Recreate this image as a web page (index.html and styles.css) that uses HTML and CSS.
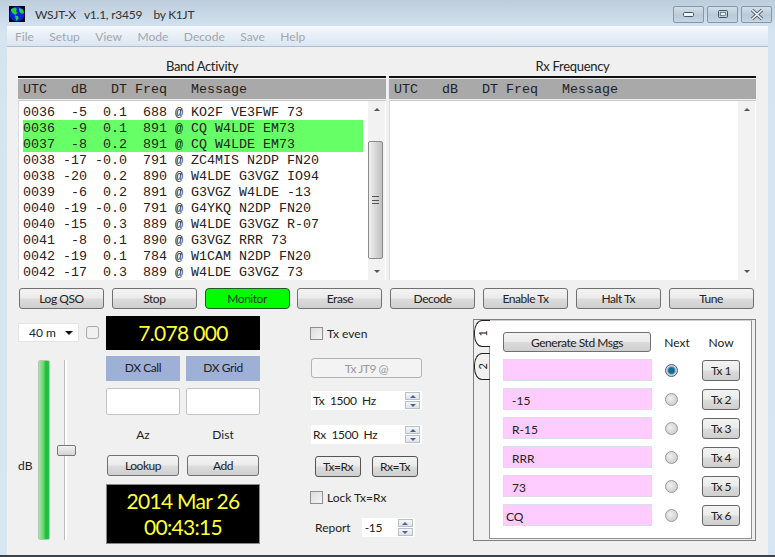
FILE: index.html
```html
<!DOCTYPE html>
<html lang="en">
<head>
    <meta charset="UTF-8">
    <meta name="viewport" content="width=device-width, initial-scale=1.0">
    <title>WSJT-X</title>
    <link rel="stylesheet" href="styles.css">
</head>
<body>

    <div class="window">
        <div class="titlebar">
            <svg class="app-icon" width="16" height="16" viewBox="0 0 16 16">
                <rect width="16" height="16" fill="#05050f"/>
                <circle cx="8" cy="8" r="7.5" fill="#0a22d8"/>
                <path d="M2 3 L6 1.5 L8 3 L7 5 L8.5 7 L6 9 L3.5 7 L2 5 Z" fill="#22d040"/>
                <path d="M6 9.5 L9 10 L9.5 12.5 L7.5 15 L6.5 12.5 Z" fill="#22d040"/>
                <path d="M10 2 L14 3.5 L15 7 L13 8 L10.5 6 L10 4 Z" fill="#22d040"/>
            </svg>
            <span class="app-title">WSJT-X   v1.1, r3459    by K1JT</span>
            <div class="win-buttons">
                <div class="win-btn">
                    <svg width="14" height="8" viewBox="0 0 14 8"><rect x="1.5" y="2.5" width="10" height="4" rx="1" fill="#eef3f7" stroke="#44535f"/></svg>
                </div>
                <div class="win-btn">
                    <svg width="12" height="10" viewBox="0 0 12 10"><rect x="1.5" y="1.5" width="9" height="7" rx="1" fill="none" stroke="#44535f"/><rect x="3.5" y="3.5" width="5" height="3" fill="#eef3f7" stroke="#44535f" stroke-width="0.6"/></svg>
                </div>
                <div class="win-btn">
                    <svg width="14" height="11" viewBox="0 0 14 11"><path d="M2 1 L12 10 M12 1 L2 10" stroke="#55636f" stroke-width="3.4"/><path d="M2 1 L12 10 M12 1 L2 10" stroke="#f2f6f9" stroke-width="1.6"/></svg>
                </div>
            </div>
        </div>

        <div class="menubar">
            <span>File</span><span>Setup</span><span>View</span><span>Mode</span><span>Decode</span><span>Save</span><span>Help</span>
        </div>

        <div class="client">
            <div class="panels">
                <div class="panel panel-left">
                    <div class="panel-title">Band Activity</div>
                    <div class="list-header">UTC   dB   DT Freq   Message</div>
                    <div class="list">
                        <div class="rows">
                            <div class="row">0036  -5  0.1  688 @ KO2F VE3FWF 73</div>
                            <div class="row cq">0036  -9  0.1  891 @ CQ W4LDE EM73</div>
                            <div class="row cq">0037  -8  0.2  891 @ CQ W4LDE EM73</div>
                            <div class="row">0038 -17 -0.0  791 @ ZC4MIS N2DP FN20</div>
                            <div class="row">0038 -20  0.2  890 @ W4LDE G3VGZ IO94</div>
                            <div class="row">0039  -6  0.2  891 @ G3VGZ W4LDE -13</div>
                            <div class="row">0040 -19 -0.0  791 @ G4YKQ N2DP FN20</div>
                            <div class="row">0040 -15  0.3  889 @ W4LDE G3VGZ R-07</div>
                            <div class="row">0041  -8  0.1  890 @ G3VGZ RRR 73</div>
                            <div class="row">0042 -19  0.1  784 @ W1CAM N2DP FN20</div>
                            <div class="row">0042 -17  0.3  889 @ W4LDE G3VGZ 73</div>
                        </div>
                        <div class="scrollbar">
                            <div class="arrow-up"></div>
                            <div class="track">
                                <div class="thumb"><div class="grip"></div></div>
                            </div>
                            <div class="arrow-down"></div>
                        </div>
                    </div>
                </div>
                <div class="panel panel-right">
                    <div class="panel-title">Rx Frequency</div>
                    <div class="list-header">UTC   dB   DT Freq   Message</div>
                    <div class="list">
                        <div class="rows"></div>
                        <div class="scrollbar">
                            <div class="arrow-up"></div>
                            <div class="track"></div>
                            <div class="arrow-down"></div>
                        </div>
                    </div>
                </div>
            </div>

            <div class="actions">
                <button class="btn">Log QSO</button>
                <button class="btn">Stop</button>
                <button class="btn monitor">Monitor</button>
                <button class="btn">Erase</button>
                <button class="btn">Decode</button>
                <button class="btn">Enable Tx</button>
                <button class="btn">Halt Tx</button>
                <button class="btn">Tune</button>
            </div>

            <div class="controls">
                <div class="col-band">
                    <div class="band-row">
                        <div class="band-select">40 m<span class="caret"></span></div>
                        <div class="band-check"></div>
                    </div>
                    <div class="level">
                        <div class="db-label">dB</div>
                        <div class="meter"></div>
                        <div class="slider">
                            <div class="slider-track"></div>
                            <div class="slider-handle"></div>
                        </div>
                    </div>
                </div>

                <div class="col-dx">
                    <div class="freq">7.078 000</div>
                    <div class="pair dx-labels">
                        <div class="dx-label">DX Call</div>
                        <div class="dx-label">DX Grid</div>
                    </div>
                    <div class="pair dx-inputs">
                        <div class="dx-input"></div>
                        <div class="dx-input"></div>
                    </div>
                    <div class="pair az-row">
                        <div>Az</div>
                        <div>Dist</div>
                    </div>
                    <div class="pair lookup-row">
                        <button class="btn">Lookup</button>
                        <button class="btn">Add</button>
                    </div>
                    <div class="clock">2014 Mar 26<br>00:43:15</div>
                </div>

                <div class="col-tx">
                    <label class="check-row"><span class="check"></span>Tx even</label>
                    <button class="btn tx-mode">Tx JT9 @</button>
                    <div class="spin spin-tx">
                        <span class="spin-value">Tx  1500  Hz</span>
                        <div class="spin-arrows"><div class="spin-up"></div><div class="spin-down"></div></div>
                    </div>
                    <div class="spin spin-rx">
                        <span class="spin-value">Rx  1500  Hz</span>
                        <div class="spin-arrows"><div class="spin-up"></div><div class="spin-down"></div></div>
                    </div>
                    <div class="swap-row">
                        <button class="btn">Tx=Rx</button>
                        <button class="btn">Rx=Tx</button>
                    </div>
                    <label class="check-row lock-row"><span class="check"></span>Lock Tx=Rx</label>
                    <div class="report-row">
                        <span>Report</span>
                        <div class="spin spin-report">
                            <span class="spin-value">-15</span>
                            <div class="spin-arrows"><div class="spin-up"></div><div class="spin-down"></div></div>
                        </div>
                    </div>
                </div>

                <div class="tabs">
                    <div class="tab-bar">
                        <div class="tab active"><span>1</span></div>
                        <div class="tab"><span>2</span></div>
                    </div>
                    <div class="tab-pane">
                        <button class="btn generate">Generate Std Msgs</button>
                        <div class="head-next">Next</div>
                        <div class="head-now">Now</div>

                        <div class="msg"></div>
                        <div class="radio on"></div>
                        <button class="btn tx-btn">Tx 1</button>

                        <div class="msg">-15</div>
                        <div class="radio"></div>
                        <button class="btn tx-btn">Tx 2</button>

                        <div class="msg">R-15</div>
                        <div class="radio"></div>
                        <button class="btn tx-btn">Tx 3</button>

                        <div class="msg">RRR</div>
                        <div class="radio"></div>
                        <button class="btn tx-btn">Tx 4</button>

                        <div class="msg">73</div>
                        <div class="radio"></div>
                        <button class="btn tx-btn">Tx 5</button>

                        <div class="msg msg-cq">CQ</div>
                        <div class="radio"></div>
                        <button class="btn tx-btn">Tx 6</button>
                    </div>
                </div>
            </div>
        </div>
    </div>

</body>
</html>
```

FILE: styles.css
```css
* {
    margin: 0;
    padding: 0;
    box-sizing: border-box;
}
body {
    font-family: Lato, "Liberation Sans", sans-serif;
    font-size: 12px;
    color: #222;
    width: 775px;
    height: 557px;
    overflow: hidden;
}
.window {
    width: 775px;
    height: 557px;
    padding: 0 7px;
    background: linear-gradient(to bottom, #bccddc 0, #d6e4f1 30px, #d8e6f4 100%);
    border-bottom: 2px solid #3c424a;
    display: flex;
    flex-direction: column;
}

/* title bar */
.titlebar {
    height: 26px;
    display: flex;
    align-items: center;
    flex-shrink: 0;
}
.app-icon {
    margin-left: 2px;
    margin-top: 2px;
}
.app-title {
    margin-left: 10px;
    margin-top: 2px;
    font-size: 12px;
    letter-spacing: -0.25px;
    color: #333;
    white-space: pre;
}
.win-buttons {
    margin-left: auto;
    margin-top: 2px;
    margin-right: -4px;
    display: flex;
    gap: 3px;
}
.win-btn {
    width: 31px;
    height: 17px;
    border: 1px solid #8398a8;
    border-radius: 2px;
    background: linear-gradient(to bottom, #d2dfe9, #b9cad8 55%, #c6d6e3);
    display: flex;
    align-items: center;
    justify-content: center;
}

/* menu */
.menubar {
    height: 21px;
    flex-shrink: 0;
    padding-left: 8px;
    display: flex;
    align-items: center;
    background: linear-gradient(to bottom, #f4f8fc, #dbe5f2);
    border-bottom: 1px solid #aebccb;
    color: #a3a7ad;
    font-size: 12px;
}
.menubar span {
    margin-right: 15.5px;
}

.client {
    flex: 1;
    background-color: #f0f0f0;
    padding: 11px 12px 0 11px;
}

/* decoded text panels */
.panels {
    display: flex;
    gap: 3px;
}
.panel-left {
    width: 368px;
}
.panel-right {
    width: 367px;
}
.panel-title {
    height: 18px;
    line-height: 17px;
    font-size: 13px;
    letter-spacing: -0.3px;
    text-align: center;
    border-bottom: 2px solid #111;
    box-sizing: content-box;
    color: #222;
}
.list-header {
    margin-top: 1px;
    height: 20px;
    line-height: 22px;
    padding-left: 5px;
    background-color: #a9a9a9;
    font-family: "Liberation Mono", monospace;
    font-size: 13.33px;
    color: #222;
    white-space: pre;
}
.list {
    height: 180px;
    margin-top: 1px;
    background-color: white;
    border-top: 1px solid #c8c8c8;
    border-left: 1px solid #dcdcdc;
    display: flex;
}
.rows {
    flex: 1;
    padding: 3px 5px 0 4px;
}
.row {
    height: 16px;
    line-height: 18px;
    font-family: "Liberation Mono", monospace;
    font-size: 13.33px;
    color: #222;
    white-space: pre;
}
.row.cq {
    background-color: #66ff66;
}
.scrollbar {
    width: 17px;
    display: flex;
    flex-direction: column;
    background-color: #f2f2f2;
    margin-right: 1px;
}
.arrow-up, .arrow-down {
    height: 17px;
    display: flex;
    align-items: center;
    justify-content: center;
}
.arrow-up::after {
    content: "";
    border-left: 3px solid transparent;
    border-right: 3px solid transparent;
    border-bottom: 3px solid #555;
}
.arrow-down::after {
    content: "";
    border-left: 3px solid transparent;
    border-right: 3px solid transparent;
    border-top: 3px solid #555;
}
.track {
    flex: 1;
    padding-top: 23px;
}
.thumb {
    width: 15px;
    height: 118px;
    border: 1px solid #8b8b8b;
    border-radius: 2px;
    background: linear-gradient(to right, #f0f0f0, #d8d8d8 50%, #c0c0c0);
    display: flex;
    align-items: center;
    justify-content: center;
}
.grip {
    width: 7px;
    height: 8px;
    border-top: 1px solid #555;
    border-bottom: 1px solid #555;
    background: linear-gradient(#555, #555) center / 100% 1px no-repeat;
}

/* button row */
.actions {
    margin-top: 8px;
    padding-left: 1px;
    display: grid;
    grid-template-columns: repeat(8, 85px);
    column-gap: 7.8px;
}
.btn {
    height: 21px;
    font-family: Lato, "Liberation Sans", sans-serif;
    font-size: 12px;
    letter-spacing: -0.45px;
    color: #222;
    border: 1px solid #707070;
    border-radius: 3px;
    background: linear-gradient(to bottom, #f3f3f3, #ebebeb 48%, #dcdcdc 52%, #cfcfcf);
}
.btn.monitor {
    background: #00ff00;
    border-color: #1c5c1c;
    border-radius: 4px;
    color: #1a3a1a;
}

.controls {
    margin-top: 7px;
    display: flex;
    align-items: flex-start;
}

/* band and level */
.col-band {
    width: 88px;
    padding-top: 7px;
}
.band-row {
    display: flex;
    align-items: center;
}
.band-select {
    width: 61px;
    height: 19px;
    line-height: 18px;
    padding-left: 10px;
    background-color: white;
    border: 1px solid #e4e4e4;
    position: relative;
}
.caret {
    position: absolute;
    right: 5px;
    top: 7px;
    border-left: 4px solid transparent;
    border-right: 4px solid transparent;
    border-top: 4px solid #111;
}
.band-check {
    width: 13px;
    height: 13px;
    margin-left: 7px;
    background-color: #f0f0f0;
    border: 1px solid #aaa;
    border-radius: 3px;
}
.level {
    margin-top: 18px;
    height: 180px;
    display: flex;
}
.db-label {
    width: 20px;
    margin-top: 98px;
}
.meter {
    width: 12px;
    height: 180px;
    border-radius: 2px;
    border: 1px solid #b4c8b4;
    background: linear-gradient(to right, #a8e4a8, #62d86a 45%, #18bd3c 70%, #2fc050);
}
.slider {
    width: 20px;
    height: 180px;
    margin-left: 7px;
    position: relative;
}
.slider-track {
    width: 3px;
    height: 180px;
    margin-left: 7px;
    background-color: white;
    border-left: 1px solid #bbb;
}
.slider-handle {
    position: absolute;
    left: 0;
    top: 85px;
    width: 19px;
    height: 11px;
    border: 1px solid #777;
    border-radius: 2px;
    background: linear-gradient(to bottom, #f2f2f2, #d4d4d4);
}

/* dx column */
.col-dx {
    width: 154px;
}
.freq {
    height: 34px;
    line-height: 33px;
    background-color: black;
    color: #ffff33;
    font-size: 21px;
    letter-spacing: -0.7px;
    text-align: center;
}
.pair {
    display: flex;
    justify-content: space-between;
}
.dx-labels {
    margin-top: 6px;
}
.dx-label {
    width: 74px;
    height: 25px;
    line-height: 24px;
    letter-spacing: -0.4px;
    text-align: center;
    background-color: #9eb0d6;
}
.dx-inputs {
    margin-top: 7px;
}
.dx-input {
    width: 74px;
    height: 27px;
    background-color: white;
    border: 1px solid #c4c4c4;
    border-radius: 2px;
}
.az-row {
    margin-top: 10px;
    height: 20px;
    line-height: 20px;
    text-align: center;
}
.az-row div {
    width: 74px;
}
.lookup-row {
    margin-top: 10px;
    padding: 0 1px;
}
.lookup-row .btn {
    width: 72px;
}
.clock {
    margin-top: 8px;
    height: 60px;
    background-color: black;
    border: 1px solid #888;
    color: #ffff33;
    font-size: 21px;
    letter-spacing: -0.7px;
    line-height: 26px;
    padding-top: 3px;
    text-align: center;
}

/* tx column */
.col-tx {
    width: 111px;
    margin-left: 51px;
}
.check-row {
    display: flex;
    align-items: center;
    gap: 4px;
    height: 13px;
    margin-top: 11px;
    margin-left: -1px;
}
.check {
    width: 13px;
    height: 13px;
    border: 1px solid #8e8e8e;
    background: linear-gradient(135deg, #dcdcdc, #f4f4f4);
}
.tx-mode {
    width: 111px;
    height: 20px;
    margin-top: 18px;
    display: block;
    color: #999;
    background: #f3f3f3;
    border-color: #b0b4b6;
}
.spin {
    height: 19px;
    background-color: white;
    display: flex;
    align-items: center;
    justify-content: space-between;
}
.spin-tx {
    margin-top: 13px;
}
.spin-rx {
    margin-top: 15px;
}
.spin-value {
    padding-left: 2px;
    letter-spacing: -0.3px;
    white-space: pre;
}
.spin-arrows {
    width: 15px;
    margin-right: 2px;
}
.spin-up, .spin-down {
    height: 8px;
    border: 1px solid #b8c0cc;
    background: linear-gradient(to bottom, #f6f6f6, #dfe3ea);
    display: flex;
    align-items: center;
    justify-content: center;
}
.spin-down {
    margin-top: 1px;
}
.spin-up::after {
    content: "";
    border-left: 3px solid transparent;
    border-right: 3px solid transparent;
    border-bottom: 3px solid #55608a;
}
.spin-down::after {
    content: "";
    border-left: 3px solid transparent;
    border-right: 3px solid transparent;
    border-top: 3px solid #55608a;
}
.swap-row {
    margin-top: 12px;
    padding: 0 4px;
    display: flex;
    justify-content: space-between;
}
.swap-row .btn {
    width: 46px;
    border-color: #555;
}
.lock-row {
    margin-top: 14px;
}
.report-row {
    margin-top: 14px;
    padding-left: 4px;
    display: flex;
    align-items: center;
}
.spin-report {
    width: 53px;
    margin-left: 11px;
}
.spin-report .spin-value {
    padding-left: 3px;
}

/* tabbed message panel */
.tabs {
    width: 283px;
    height: 222px;
    margin-left: 51px;
    margin-top: 3px;
    border: 1px solid #808080;
    padding: 0 3px 1px 0;
    display: flex;
}
.tab-bar {
    width: 16px;
    flex-shrink: 0;
    margin-right: -1px;
    position: relative;
    z-index: 1;
}
.tab {
    width: 16px;
    height: 27px;
    margin-top: 6px;
    border: 1px solid #222;
    border-right: none;
    border-radius: 8px 0 0 8px / 12px 0 0 12px;
    display: flex;
    align-items: center;
    justify-content: center;
    font-size: 11px;
}
.tab span {
    writing-mode: vertical-rl;
    transform: rotate(180deg);
}
.tab.active {
    margin-top: 0;
    background-color: white;
}
.tab-pane {
    flex: 1;
    background-color: white;
    border: 1px solid #909090;
    border-top: 1px solid #d0d0d0;
    padding: 11px 0 0 13px;
    display: grid;
    grid-template-columns: 149px 50px 38px;
    grid-template-rows: 20px repeat(6, 22px);
    row-gap: 7px;
    align-items: center;
    align-content: start;
}
.generate {
    width: 148px;
    height: 20px;
}
.head-next {
    text-align: center;
}
.head-now {
    text-align: center;
}
.msg {
    height: 22px;
    line-height: 23px;
    padding-left: 8px;
    background-color: #ffccff;
    border: 1px solid #dcdce4;
}
.msg-cq {
    padding-left: 2px;
}
.radio {
    width: 13px;
    height: 13px;
    margin-left: 13px;
    border-radius: 50%;
    border: 1px solid #999;
    background: radial-gradient(circle at 40% 40%, #f0f0f0, #c4c4c4);
}
.radio.on {
    background: radial-gradient(circle, #0f6a96 0, #0f6a96 35%, #c8d4dc 60%, #e4e8ec);
    border-color: #557;
}
.tx-btn {
    width: 38px;
    height: 21px;
    border-color: #666;
}
```
